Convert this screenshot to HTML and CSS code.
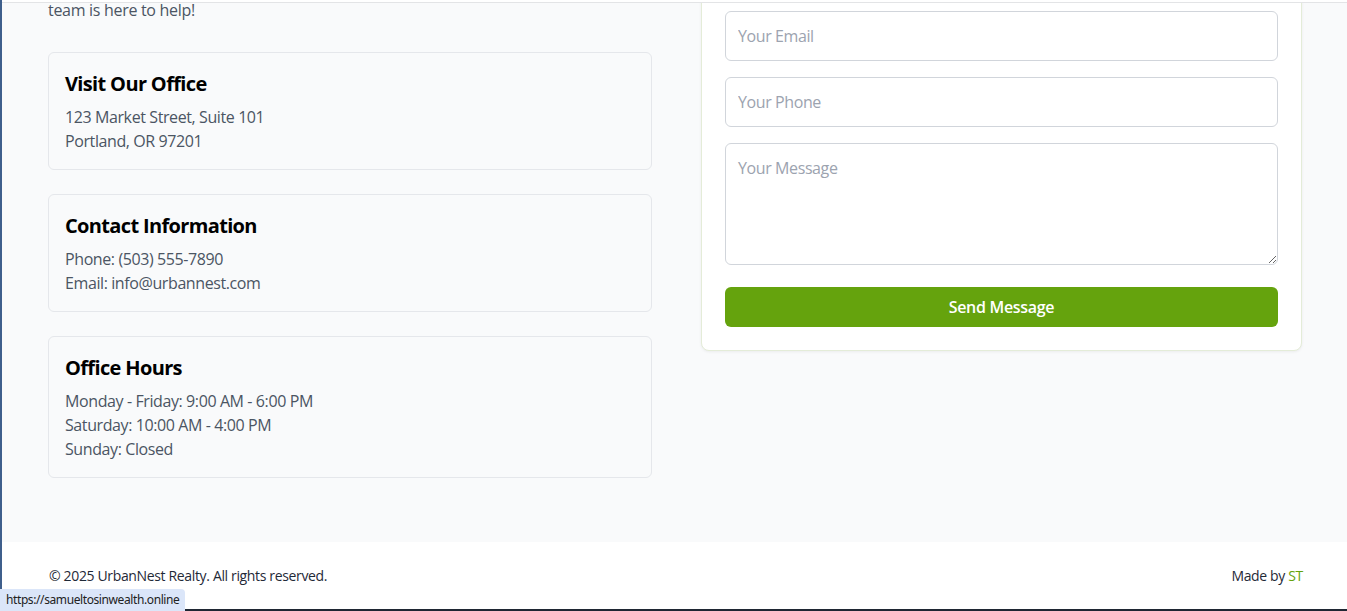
FILE: index.html
```html
<!DOCTYPE html>
<html lang="en">
<head>
<meta charset="utf-8">
<title>Contact - UrbanNest Realty</title>
<link rel="stylesheet" href="styles.css">
</head>
<body>
<div class="frame-top"></div>
<div class="frame-left"></div>

<main class="contact">
  <div class="contact-grid">
    <div class="info-col">
      <p class="lead">team is here to help!</p>
      <div class="info-card">
        <h3>Visit Our Office</h3>
        <p>123 Market Street, Suite 101<br>Portland, OR 97201</p>
      </div>
      <div class="info-card">
        <h3>Contact Information</h3>
        <p>Phone: (503) 555-7890<br>Email: info@urbannest.com</p>
      </div>
      <div class="info-card">
        <h3>Office Hours</h3>
        <p>Monday - Friday: 9:00 AM - 6:00 PM<br>Saturday: 10:00 AM - 4:00 PM<br>Sunday: Closed</p>
      </div>
    </div>

    <form class="form-card">
      <input class="field" type="text" placeholder="Your Name">
      <input class="field" type="email" placeholder="Your Email">
      <input class="field" type="tel" placeholder="Your Phone">
      <textarea class="field area" rows="4" placeholder="Your Message"></textarea>
      <button class="send" type="button">Send Message</button>
    </form>
  </div>
</main>

<footer class="footer">
  <p>© 2025 UrbanNest Realty. All rights reserved.</p>
  <p>Made by <a class="st" href="#">ST</a></p>
</footer>

<div class="status">https://samueltosinwealth.online</div>
<div class="frame-bottom"></div>
</body>
</html>
```
FILE: styles.css
```css
* { box-sizing: border-box; }
html, body { margin: 0; padding: 0; }
body {
  background: #f9fafb;
  font-family: "Open Sans", "Noto Sans", sans-serif;
  font-size: 16px;
  line-height: 24px;
  color: #111827;
  letter-spacing: -0.4px;
}

.frame-top {
  position: fixed; top: 0; left: 0; right: 0;
  height: 3px; background: #fff; border-bottom: 1px solid #e3e4e6; z-index: 5;
}
.frame-left {
  position: fixed; top: 0; bottom: 0; left: 0;
  width: 2px; background: #3f5f8c; z-index: 6;
}
.frame-bottom {
  position: fixed; left: 0; right: 0; bottom: 0;
  height: 2px; background: #1f2733; z-index: 4;
}

.contact { padding: 0 45px 64px 48px; }
.contact-grid {
  display: grid;
  grid-template-columns: 604px 601px;
  column-gap: 49px;
  align-items: start;
}

.lead {
  margin: -4px 0 28px;
  font-size: 16px; line-height: 28px;
  color: #4b5563;
  letter-spacing: -0.3px;
}

.info-card {
  border: 1px solid #e5e7eb;
  border-radius: 6px;
  padding: 16px;
  margin-bottom: 24px;
}
.info-card:last-child { margin-bottom: 0; }
.info-card h3 {
  margin: 0 0 8px;
  padding-top: 1px;
  font-size: 20px; line-height: 28px; font-weight: 700;
  color: #000;
  letter-spacing: -0.65px;
}
.info-card h3 + p { margin-top: -1px; }
.info-card p { margin: 0; color: #4b5563; }

.form-card {
  margin-top: -79px;
  background: #fff;
  border: 1px solid #e4ecd8;
  border-radius: 8px;
  box-shadow: 0 1px 3px rgba(0,0,0,0.06);
  padding: 23px;
  display: flex; flex-direction: column;
}
.field {
  display: block;
  width: 100%;
  height: 50px;
  border: 1px solid #d1d5db;
  border-radius: 6px;
  padding: 12px;
  font: inherit;
  letter-spacing: -0.4px;
  color: #111827;
  background: #fff;
  margin-bottom: 16px;
}
.field::placeholder { color: #9ca3af; }
.area { height: 122px; resize: vertical; margin-bottom: 22px; }

.send {
  height: 40px;
  border: 0;
  border-radius: 6px;
  background: #65a30d;
  color: #fff;
  font: inherit; font-weight: 600;
  letter-spacing: -0.3px;
}

.footer {
  background: #fff;
  display: flex; justify-content: space-between;
  padding: 24px 44px 25px 49px;
  font-size: 14px; line-height: 20px;
  color: #1f2937;
  letter-spacing: -0.35px;
}
.footer p { margin: 0; }
.st { color: #65a30d; text-decoration: none; }

.status {
  position: fixed; left: 0; bottom: 0;
  height: 22px; padding: 0 6px;
  background: #dbe6f9;
  border-top-right-radius: 4px;
  font-family: "Noto Sans", sans-serif;
  font-size: 12px; line-height: 22px;
  color: #222;
  letter-spacing: -0.4px;
  z-index: 7;
}
```
